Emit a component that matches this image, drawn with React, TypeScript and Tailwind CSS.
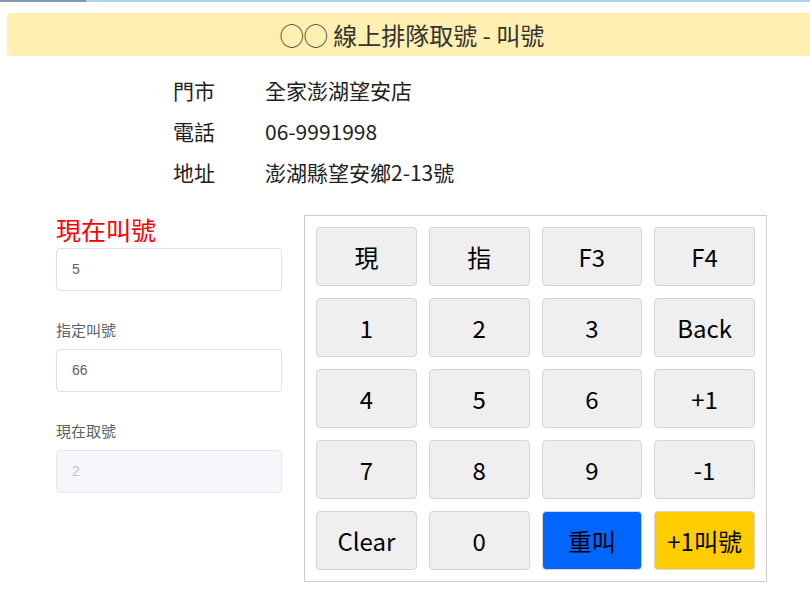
import React from "react";

const keys: { label: string; cls: string }[] = [
  { label: "現", cls: "bg-[#efefef] border-[#d8d4cf]" },
  { label: "指", cls: "bg-[#efefef] border-[#d8d4cf]" },
  { label: "F3", cls: "bg-[#efefef] border-[#d8d4cf]" },
  { label: "F4", cls: "bg-[#efefef] border-[#d8d4cf]" },
  { label: "1", cls: "bg-[#efefef] border-[#d8d4cf]" },
  { label: "2", cls: "bg-[#efefef] border-[#d8d4cf]" },
  { label: "3", cls: "bg-[#efefef] border-[#d8d4cf]" },
  { label: "Back", cls: "bg-[#efefef] border-[#d8d4cf]" },
  { label: "4", cls: "bg-[#efefef] border-[#d8d4cf]" },
  { label: "5", cls: "bg-[#efefef] border-[#d8d4cf]" },
  { label: "6", cls: "bg-[#efefef] border-[#d8d4cf]" },
  { label: "+1", cls: "bg-[#efefef] border-[#d8d4cf]" },
  { label: "7", cls: "bg-[#efefef] border-[#d8d4cf]" },
  { label: "8", cls: "bg-[#efefef] border-[#d8d4cf]" },
  { label: "9", cls: "bg-[#efefef] border-[#d8d4cf]" },
  { label: "-1", cls: "bg-[#efefef] border-[#d8d4cf]" },
  { label: "Clear", cls: "bg-[#efefef] border-[#d8d4cf]" },
  { label: "0", cls: "bg-[#efefef] border-[#d8d4cf]" },
  { label: "重叫", cls: "bg-[#0066ff] border-[#d8d4cf]" },
  { label: "+1叫號", cls: "bg-[#ffcc00] border-[#d8d4cf]" },
];

const info = [
  ["門市", "全家澎湖望安店"],
  ["電話", "06-9991998"],
  ["地址", "澎湖縣望安鄉2-13號"],
];

export default function App() {
  return (
    <div
      className="w-full min-h-[610px] overflow-hidden bg-white"
      style={{ fontFamily: '"Noto Sans CJK TC", "Noto Sans", sans-serif' }}
    >
      <div className="flex h-[2px]">
        <div className="w-[86px] bg-[#7c9aa5]" />
        <div className="flex-1 bg-[#a8d8e8]" />
      </div>
      <div className="mt-[11px] ml-[7px] w-[810px] h-[43px] bg-[#ffefb0] rounded-[4px] flex items-center justify-center text-[24px] text-[#333]">
        ◯◯ 線上排隊取號 - 叫號
      </div>
      <div className="mt-[14px] ml-[173px] flex flex-col">
        {info.map(([k, v]) => (
          <div key={k} className="h-[41px] flex items-center text-[21px] text-[#212121]">
            <div className="w-[92px]">{k}</div>
            <div>{v}</div>
          </div>
        ))}
      </div>
      <div className="mt-[22px] ml-[56px] flex">
        <div className="w-[226px] flex flex-col">
          <div className="h-[33px] leading-[28px] text-[25px] text-[#ff0000]">現在叫號</div>
          <div
            className="h-[43px] border border-[#dcdfe6] rounded-[4px] flex items-center px-[15px] text-[14px] text-[#606266]"
            style={{ fontFamily: '"Liberation Sans", Arial, sans-serif' }}
          >
            5
          </div>
          <div className="mt-[22px] h-[36px] leading-[34px] text-[15px] text-[#606266]">指定叫號</div>
          <div
            className="h-[43px] border border-[#dcdfe6] rounded-[4px] flex items-center px-[15px] text-[14px] text-[#606266]"
            style={{ fontFamily: '"Liberation Sans", Arial, sans-serif' }}
          >
            66
          </div>
          <div className="mt-[22px] h-[36px] leading-[34px] text-[15px] text-[#606266]">現在取號</div>
          <div
            className="h-[43px] border border-[#e4e7ed] bg-[#f5f7fa] rounded-[4px] flex items-center px-[15px] text-[14px] text-[#c0c4cc]"
            style={{ fontFamily: '"Liberation Sans", Arial, sans-serif' }}
          >
            2
          </div>
        </div>
        <div className="ml-[22px] w-[463px] border border-[#cccccc] p-[11px]">
          <div className="grid grid-cols-4 gap-[12px]">
            {keys.map((k) => (
              <button
                key={k.label}
                className={`h-[59px] border rounded-[4px] flex items-center justify-center text-[24px] text-black ${k.cls}`}
              >
                {k.label}
              </button>
            ))}
          </div>
        </div>
      </div>
    </div>
  );
}
